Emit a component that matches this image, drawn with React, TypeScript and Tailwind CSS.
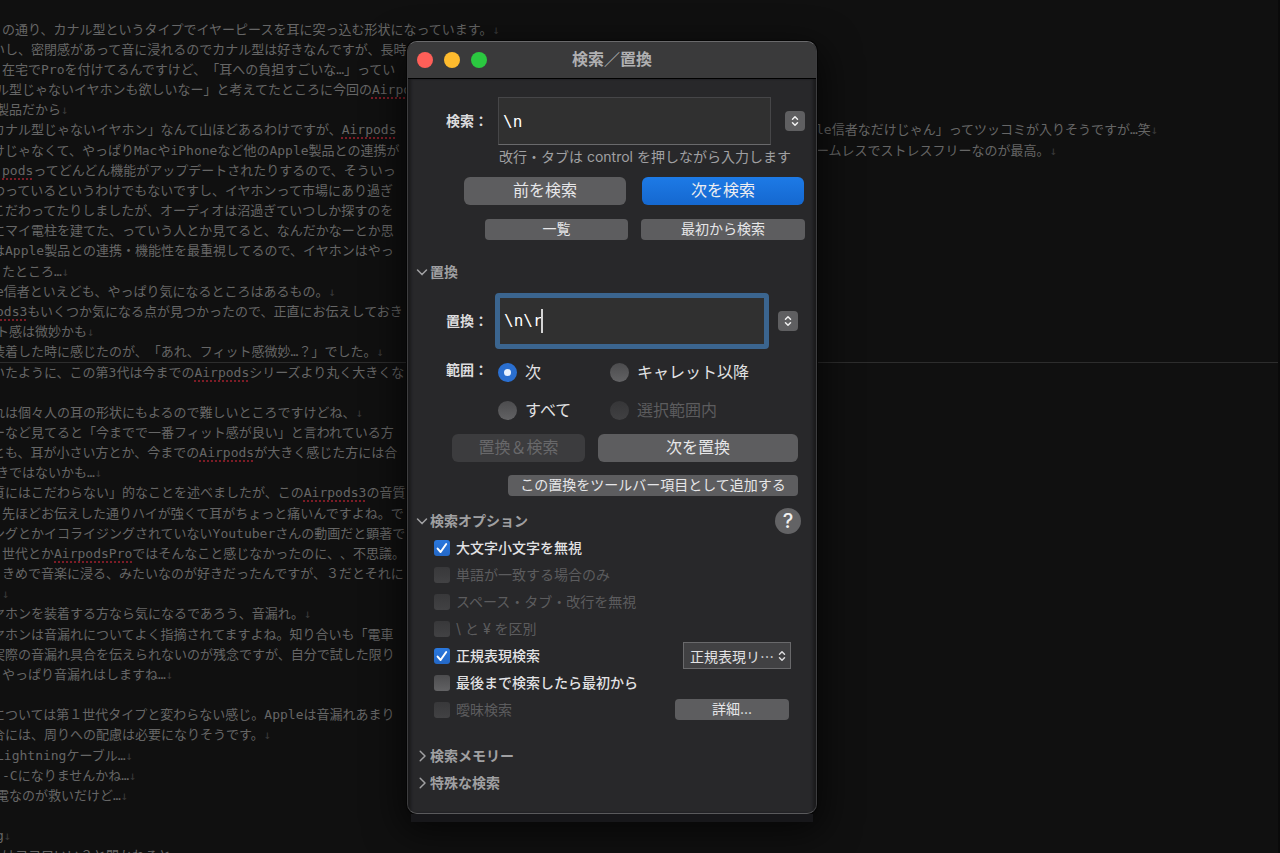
import { useState, type ReactNode } from "react";
import clsx from "clsx";

type Line = {
    text: string
    // how much of the first glyph is scrolled out on the left
    cut?: "half" | "full"
    right?: string
    end?: boolean
    ruled?: boolean
}

// words wrapped in [] are flagged by the spell checker
const paragraphs: Line[][] = [
    [
        { text: "の通り、カナル型というタイプでイヤーピースを耳に突っ込む形状になっています。", end: true },
        { text: "いし、密閉感があって音に浸れるのでカナル型は好きなんですが、長時", cut: "full" },
        { text: "在宅でProを付けてるんですけど、「耳への負担すごいな…」ってい" },
        { text: "ル型じゃないイヤホンも欲しいなー」と考えてたところに今回の[Airpods]", cut: "half" },
        { text: "製品だから", cut: "half", end: true },
        { text: "カナル型じゃないイヤホン」なんて山ほどあるわけですが、[Airpods]", cut: "full", right: "le信者なだけじゃん」ってツッコミが入りそうですが…笑", end: true },
    ],
    [
        { text: "けじゃなくて、やっぱりMacやiPhoneなど他のApple製品との連携が", cut: "full", right: "ームレスでストレスフリーなのが最高。", end: true },
        { text: "[pods]ってどんどん機能がアップデートされたりするので、そういっ" },
        { text: "わっているというわけでもないですし、イヤホンって市場にあり過ぎ", cut: "full" },
        { text: "こだわってたりしましたが、オーディオは沼過ぎていつしか探すのを", cut: "full" },
        { text: "にマイ電柱を建てた、っていう人とか見てると、なんだかなーとか思", cut: "full" },
        { text: "はApple製品との連携・機能性を最重視してるので、イヤホンはやっ", cut: "full" },
    ],
    [
        { text: "たところ…", end: true },
        { text: "e信者といえども、やっぱり気になるところはあるもの。", cut: "half", end: true },
        { text: "[ods3]もいくつか気になる点が見つかったので、正直にお伝えしておき", cut: "half" },
        { text: "ト感は微妙かも", cut: "half", end: true },
        { text: "装着した時に感じたのが、「あれ、フィット感微妙…？」でした。", cut: "full", end: true },
        { text: "いたように、この第3代は今までの[Airpods]シリーズより丸く大きくな", cut: "full", ruled: true },
    ],
    [
        { text: "" },
        { text: "れは個々人の耳の形状にもよるので難しいところですけどね、", cut: "full", end: true },
        { text: "ーなど見てると「今までで一番フィット感が良い」と言われている方", cut: "full" },
        { text: "とも、耳が小さい方とか、今までの[Airpods]が大きく感じた方には合", cut: "full" },
        { text: "きではないかも…", cut: "half", end: true },
        { text: "質にはこだわらない」的なことを述べましたが、この[Airpods3]の音質", cut: "full" },
    ],
    [
        { text: "先ほどお伝えした通りハイが強くて耳がちょっと痛いんですよね。で" },
        { text: "ングとかイコライジングされていないYoutuberさんの動画だと顕著で", cut: "full" },
        { text: "世代とか[AirpodsPro]ではそんなこと感じなかったのに、、不思議。" },
        { text: "きめで音楽に浸る、みたいなのが好きだったんですが、３だとそれに" },
        { text: "", end: true },
        { text: "ヤホンを装着する方なら気になるであろう、音漏れ。", cut: "full", end: true },
    ],
    [
        { text: "ヤホンは音漏れについてよく指摘されてますよね。知り合いも「電車", cut: "full" },
        { text: "実際の音漏れ具合を伝えられないのが残念ですが、自分で試した限り", cut: "full" },
        { text: "やっぱり音漏れはしますね…", end: true },
        { text: "" },
        { text: "については第１世代タイプと変わらない感じ。Appleは音漏れあまり", cut: "full" },
        { text: "合には、周りへの配慮は必要になりそうです。", cut: "full", end: true },
    ],
    [
        { text: "Lightningケーブル…", cut: "half", end: true },
        { text: "-Cになりませんかね…", end: true },
        { text: "電なのが救いだけど…", cut: "half", end: true },
        { text: "" },
        { text: "g", cut: "half", end: true },
        { text: "はココロいい？と聞かれると" },
    ],
]

const options = [
    { label: "大文字小文字を無視", checked: true },
    { label: "単語が一致する場合のみ", disabled: true },
    { label: "スペース・タブ・改行を無視", disabled: true },
    { label: "\\ と ¥ を区別", disabled: true },
    { label: "正規表現検索", checked: true, extra: "syntax" },
    { label: "最後まで検索したら最初から" },
    { label: "曖昧検索", disabled: true, extra: "detail" },
]

const ranges = [
    { label: "次" },
    { label: "キャレット以降" },
    { label: "すべて" },
    { label: "選択範囲内", disabled: true },
]

function Spelled({ text }: { text: string }) {
    return (
        <>
            {text.split(/(\[[^\]]+\])/).map((part, index) =>
                part.startsWith("[") ? (
                    <span key={index} className="underline decoration-dotted decoration-[#7c1c26] decoration-2 underline-offset-3">{part.slice(1, -1)}</span>
                ) : part
            )}
        </>
    )
}

function LineEnd() {
    return <span className="text-xs text-[#3a3a3a]">↓</span>
}

function EditorLine({ line }: { line: Line }) {
    return (
        <div className={clsx("flex h-5 pl-0.5 leading-5 whitespace-pre", line.ruled && "border-t border-[#2d2d2d]")}>
            <p className={clsx(line.right && "w-[814px] shrink-0", line.cut === "full" && "-indent-2.5", line.cut === "half" && "-indent-1.5")}>
                <Spelled text={line.text} />
                {line.end && !line.right && <LineEnd />}
            </p>
            {line.right && <p>{line.right}<LineEnd /></p>}
        </div>
    )
}

function UpDown({ className }: { className?: string }) {
    return (
        <svg viewBox="0 0 10 12" className={clsx("w-2.5 h-3", className)} fill="none" stroke="currentColor" strokeWidth="1.5" strokeLinecap="round" strokeLinejoin="round">
            <path d="M2.5 4.2 5 1.8l2.5 2.4M2.5 7.8 5 10.2l2.5-2.4" />
        </svg>
    )
}

function Stepper({ label }: { label: string }) {
    return (
        <button aria-label={label} className="w-5 h-5 shrink-0 rounded bg-[#5f5f61] text-[#f0f0f0] flex items-center justify-center">
            <UpDown />
        </button>
    )
}

function Heading({ children, open }: { children: ReactNode, open?: boolean }) {
    return (
        <button aria-expanded={!!open} className="flex items-center gap-0.5 text-sm leading-5 font-bold text-[#a0a0a2]">
            <svg viewBox="0 0 12 12" className="w-3 h-3" fill="none" stroke="currentColor" strokeWidth="1.5" strokeLinecap="round" strokeLinejoin="round">
                <path d={open ? "M1.5 4 6 8.6 10.5 4" : "M4.2 1.2 9 6l-4.8 4.8"} />
            </svg>
            {children}
        </button>
    )
}

function PushButton({ children, primary, small, disabled, className }: { children: ReactNode, primary?: boolean, small?: boolean, disabled?: boolean, className: string }) {
    return (
        <button
            disabled={disabled}
            className={clsx(
                "flex items-center justify-center whitespace-nowrap",
                small ? "h-[21px] rounded text-sm leading-5 pb-0.5" : "h-7 rounded-md text-base leading-6 pb-0.5",
                primary ? "bg-linear-to-b from-[#1d7ae6] to-[#1568d0] text-[#ededf0]" : disabled ? "bg-[#3c3c3e] text-[#68686a]" : "bg-[#5d5d5f] text-[#e6e6e8]",
                className
            )}
        >
            {children}
        </button>
    )
}

export default function App() {
    const [find, setFind] = useState("\\n")
    const [replace, setReplace] = useState("\\n\\r")

    return (
        <div className="relative w-full h-screen overflow-hidden bg-[#101010]">
            <main className="pt-5 flex flex-col gap-px overflow-hidden border-r-2 border-[#0a0a0a] text-[13px] text-[#666666] font-['DejaVu_Sans_Mono','Noto_Sans_CJK_JP',monospace] [text-spacing-trim:space-all]">
                {paragraphs.map((lines, index) => (
                    <section key={index}>
                        {lines.map((line, i) => <EditorLine key={i} line={line} />)}
                    </section>
                ))}
            </main>

            <div className="absolute left-[407px] top-[41px] w-[410px] font-['Inter','Noto_Sans_CJK_JP',sans-serif] [text-spacing-trim:space-all]">
                <div role="dialog" aria-label="検索／置換" className="relative z-10 rounded-[10px] overflow-hidden border border-[#3d3d3f] border-t-[#6a6a6c] border-b-[#5a5a5c] bg-[#28282a]">
                    <header className="h-[37px] flex items-center bg-[#3a3a3b] border-b border-black px-[9px]">
                        <div className="flex flex-1 gap-[11px]">
                            <button aria-label="閉じる" className="w-4 h-4 rounded-full bg-[#fe5f58]" />
                            <button aria-label="しまう" className="w-4 h-4 rounded-full bg-[#febb2e]" />
                            <button aria-label="拡大" className="w-4 h-4 rounded-full bg-[#2bc840]" />
                        </div>
                        <h1 className="pb-0.5 text-base leading-6 font-bold text-[#b0b0b2]">検索／置換</h1>
                        <div className="flex-1" />
                    </header>

                    <div className="pt-[18px] pb-[17px] shadow-[inset_4px_0_3px_-1px_#1b1b1d,inset_-4px_0_3px_-1px_#1b1b1d]">
                        <div className="flex items-center pr-[11px]">
                            <label htmlFor="find" className="w-20 text-right text-sm font-bold text-[#dcdcde]">検索：</label>
                            <input id="find" value={find} onChange={(e) => setFind(e.target.value)} className="ml-2.5 mr-3.5 h-12 min-w-0 flex-1 bg-[#303030] border border-[#464648] border-b-[#6a6a6c] px-1 text-base text-white font-['DejaVu_Sans_Mono',monospace] outline-none" />
                            <Stepper label="検索履歴" />
                        </div>
                        <p className="pl-[91px] h-6 text-sm leading-6 whitespace-nowrap text-[#a0a0a2]">改行・タブは control を押しながら入力します</p>

                        <div className="mt-2 pr-3 flex justify-end gap-4">
                            <PushButton className="w-[162px]">前を検索</PushButton>
                            <PushButton primary className="w-[162px]">次を検索</PushButton>
                        </div>
                        <div className="mt-3.5 pr-[11px] flex justify-end gap-[13px]">
                            <PushButton small className="w-[143px]">一覧</PushButton>
                            <PushButton small className="w-[164px]">最初から検索</PushButton>
                        </div>

                        <div className="mt-[22px] pl-2">
                            <Heading open>置換</Heading>
                        </div>
                        <div className="mt-[11px] flex items-center pr-[18px]">
                            <label htmlFor="replace" className="w-20 text-right text-sm font-bold text-[#dcdcde]">置換：</label>
                            <div className="relative ml-[7px] mr-[9px] min-w-0 flex-1">
                                <input id="replace" value={replace} onChange={(e) => setReplace(e.target.value)} className="block w-full h-14 rounded bg-[#303030] border-5 border-[#3b658f] px-1 pb-0.5 text-base text-white font-['DejaVu_Sans_Mono',monospace] outline-none caret-transparent" />
                                <span className="absolute left-[46px] top-4 w-0.5 h-6 bg-[#d4d4d4]" />
                            </div>
                            <Stepper label="置換履歴" />
                        </div>

                        <fieldset className="mt-[13px] flex">
                            <legend className="float-left w-20 text-right text-sm leading-4 font-bold text-[#dcdcde]">範囲：</legend>
                            <div className="ml-2.5 grid grid-cols-[112px_auto] gap-y-[18px]">
                                {ranges.map((range, index) => (
                                    <label key={range.label} className={clsx("flex items-center gap-2 h-5 text-base leading-5", range.disabled ? "text-[#5c5c5e]" : "text-[#e2e2e4]")}>
                                        <input
                                            type="radio"
                                            name="range"
                                            defaultChecked={index === 0}
                                            disabled={range.disabled}
                                            className="appearance-none w-[19px] h-[19px] rounded-full bg-linear-to-b from-[#4c4c4e] to-[#626264] checked:border-[6px] checked:border-[#2a6fd0] checked:bg-[#e8f2ff] checked:bg-none disabled:from-[#363638] disabled:to-[#404042]"
                                        />
                                        {range.label}
                                    </label>
                                ))}
                            </div>
                        </fieldset>

                        <div className="mt-3.5 pr-[18px] flex justify-end gap-[13px]">
                            <PushButton disabled className="w-[133px]">置換＆検索</PushButton>
                            <PushButton className="w-[200px]">次を置換</PushButton>
                        </div>
                        <div className="mt-[13px] pr-[18px] flex justify-end">
                            <PushButton small className="w-[290px]">この置換をツールバー項目として追加する</PushButton>
                        </div>

                        <div className="mt-3 pl-2 pr-[15px] flex items-center justify-between">
                            <Heading open>検索オプション</Heading>
                            <button aria-label="ヘルプ" className="w-[26px] h-[26px] rounded-full bg-[#636365] text-xl leading-6 font-medium text-[#f0f0f0]">?</button>
                        </div>
                        <ul className="pl-[26px]">
                            {options.map((option) => (
                                <li key={option.label} className="flex items-center justify-between h-[27px]">
                                    <label className={clsx("flex items-center gap-1.5 text-sm leading-5", option.disabled ? "text-[#5c5c5e]" : "text-[#e2e2e4] font-medium")}>
                                        <span className="relative flex">
                                            <input
                                                type="checkbox"
                                                defaultChecked={option.checked}
                                                disabled={option.disabled}
                                                className="peer appearance-none w-4 h-4 rounded-[3px] bg-linear-to-b from-[#4c4c4e] to-[#626264] checked:from-[#2a78de] checked:to-[#2468c6] disabled:from-[#38383a] disabled:to-[#424244]"
                                            />
                                            <svg viewBox="0 0 16 16" className="absolute inset-0 w-4 h-4 hidden peer-checked:block pointer-events-none" fill="none" stroke="white" strokeWidth="2" strokeLinecap="round" strokeLinejoin="round">
                                                <path d="M3.6 8.6 6.6 12 12.2 4" />
                                            </svg>
                                        </span>
                                        {option.label}
                                    </label>
                                    {option.extra === "syntax" && (
                                        <div className="relative mr-[25px]">
                                            <select aria-label="正規表現ライブラリ" className="block appearance-none w-[108px] h-[27px] bg-[#414143] border border-[#69696b] pl-1.5 text-sm text-[#e2e2e4] font-['Noto_Sans_CJK_JP',sans-serif]">
                                                <option>正規表現リ…</option>
                                            </select>
                                            <UpDown className="absolute right-1 top-2 text-[#dcdcde] pointer-events-none" />
                                        </div>
                                    )}
                                    {option.extra === "detail" && <PushButton small className="w-[114px] mr-[27px]">詳細...</PushButton>}
                                </li>
                            ))}
                        </ul>

                        <div className="mt-[19px] pl-2 flex flex-col">
                            <div className="h-[27px] flex items-center"><Heading>検索メモリー</Heading></div>
                            <div className="h-[27px] flex items-center"><Heading>特殊な検索</Heading></div>
                        </div>
                    </div>
                </div>
                <div className="absolute inset-x-0 top-0 bottom-2 rounded-[10px] shadow-[0_0_0_1px_#050505,0_12px_36px_6px_#000000a0]" />
                <div className="relative mx-1 h-2 bg-[#17171a]" />
            </div>
        </div>
    );
}
